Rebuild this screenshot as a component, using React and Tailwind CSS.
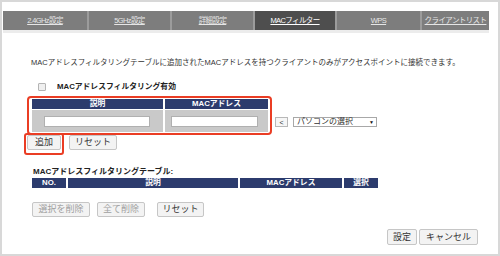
const tabs = [
  { label: '2.4GHz設定', w: 'w-[84px]' },
  { label: '5GHz設定', w: 'w-[83px]' },
  { label: '詳細設定', w: 'w-[83px]' },
  { label: 'MACフィルター', w: 'w-[82px]', active: true },
  { label: 'WPS', w: 'w-[85px]' },
  { label: 'クライアントリスト', w: 'flex-1' },
];

const Btn = ({ children, className = '', disabled }) => (
  <button
    className={`h-[15px] flex items-center justify-center bg-[#f3f3f3] border border-[#c6c6c6] rounded-[2px] text-[9px] leading-none whitespace-nowrap ${
      disabled ? 'text-[#a0a0a0]' : 'text-[#333]'
    } ${className}`}
  >
    {children}
  </button>
);

export default function App() {
  return (
    <div className="w-[500px] h-[256px] border-2 border-[#d8d8d8] bg-white flex flex-col font-['Liberation_Sans','Noto_Sans_CJK_JP',sans-serif] text-[#333]">
      {/* tabs */}
      <div className="mt-[9px] ml-[1px] w-[486px]">
        <div className="h-[19px] bg-[#7d7d7d] flex">
          {tabs.map((t, i) => (
            <div
              key={t.label}
              className={`${t.w} h-full flex items-center justify-center whitespace-nowrap ${
                i > 0 ? 'border-l-2 border-[#9c9c9c]' : ''
              } ${t.active ? 'bg-[#4e4e4e] text-white' : 'text-[#e6e6e6]'}`}
            >
              <span className="text-[7.5px] tracking-[-0.6px] underline">{t.label}</span>
            </div>
          ))}
        </div>
        <div className="h-[3px] bg-[#ececec]" />
      </div>

      <p className="mt-[25px] ml-[29px] text-[7.5px] leading-[10px] whitespace-nowrap">
        MACアドレスフィルタリングテーブルに追加されたMACアドレスを持つクライアントのみがアクセスポイントに接続できます。
      </p>

      <div className="mt-[14px] ml-[36px] h-[9px] flex items-center">
        <span className="w-[8px] h-[8px] border border-[#b4b4b4] bg-[#efefef] rounded-[1px]" />
        <span className="ml-[11px] text-[7.8px] font-bold text-[#222]">MACアドレスフィルタリング有効</span>
      </div>

      {/* add entry */}
      <div className="mt-[5px] ml-[25px] flex items-start">
        <div className="w-[245px] h-[39px] border-2 border-[#ea3d24] rounded-[4px] pt-[1px] pl-[3px]">
          <div className="flex h-[10px] text-white text-[7.8px] font-bold">
            <div className="w-[131px] bg-[#2c3b6d] flex items-center justify-center">説明</div>
            <div className="w-[103px] ml-[2px] bg-[#2c3b6d] flex items-center justify-center">MACアドレス</div>
          </div>
          <div className="flex h-[22px] mt-[1px]">
            <div className="w-[131px] bg-[#c9c9c9] flex items-center pl-[12px] pt-[1px]">
              <input type="text" className="w-[106px] h-[11px] bg-white border border-[#b0b0b0]" />
            </div>
            <div className="w-[103px] ml-[2px] bg-[#c9c9c9] flex items-center pl-[6px] pt-[1px]">
              <input type="text" className="w-[87px] h-[11px] bg-white border border-[#b0b0b0]" />
            </div>
          </div>
        </div>
        <div className="ml-[3px] mt-[21px] w-[13px] h-[10px] border border-[#b8b8b8] bg-[#f6f6f6] flex items-center justify-center text-[7px] leading-none">
          &lt;
        </div>
        <div className="ml-[5px] mt-[21px] w-[84px] h-[10px] border border-[#a8a8a8] bg-white flex items-center justify-between pl-[3px] pr-[2px]">
          <span className="text-[8px] leading-none">パソコンの選択</span>
          <span className="text-[5px] leading-none text-[#111]">▼</span>
        </div>
      </div>

      <div className="mt-[-2px] ml-[22px] flex items-start">
        <div className="border-2 border-[#ea3d24] rounded-[3px] px-[1px] pb-[3px]">
          <Btn className="w-[34px]">追加</Btn>
        </div>
        <Btn className="w-[48px] ml-[5px] mt-[2px]">リセット</Btn>
      </div>

      {/* table */}
      <p className="mt-[12px] ml-[31px] text-[8px] leading-[10px] font-bold text-[#222]">
        MACアドレスフィルタリングテーブル:
      </p>
      <div className="mt-[1px] ml-[30px] flex h-[10px] text-white text-[7.8px] font-bold">
        <div className="w-[34px] bg-[#2c3b6d] flex items-center justify-center">NO.</div>
        <div className="w-[170px] ml-[2px] bg-[#2c3b6d] flex items-center justify-center">説明</div>
        <div className="w-[102px] ml-[2px] bg-[#2c3b6d] flex items-center justify-center">MACアドレス</div>
        <div className="w-[34px] ml-[2px] bg-[#2c3b6d] flex items-center justify-center">選択</div>
      </div>

      <div className="mt-[14px] ml-[30px] flex">
        <Btn disabled className="w-[58px]">選択を削除</Btn>
        <Btn disabled className="w-[48px] ml-[7px]">全て削除</Btn>
        <Btn className="w-[47px] ml-[12px]">リセット</Btn>
      </div>

      <div className="mt-[12px] mr-[20px] flex justify-end">
        <Btn className="w-[30px] h-[16px]">設定</Btn>
        <Btn className="w-[59px] h-[16px] ml-[2px]">キャンセル</Btn>
      </div>
    </div>
  );
}
